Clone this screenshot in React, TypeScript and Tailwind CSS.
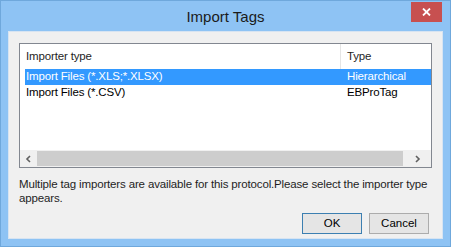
const FONT = { fontFamily: '"Segoe UI", "Liberation Sans", Arial, sans-serif' };

const ROWS = [
  { name: "Import Files (*.XLS;*.XLSX)", type: "Hierarchical", selected: true },
  { name: "Import Files (*.CSV)", type: "EBProTag", selected: false },
];

function TitleBar() {
  return (
    <div className="relative h-[30px] flex items-center justify-center">
      <span className="text-[15px] text-[#1b1b1b] mt-[2px]">Import Tags</span>
      {/* Close button */}
      <div className="absolute right-[8px] top-[1px] h-[20px] w-[31px] bg-[#c75050] flex items-center justify-center">
        <svg width="9" height="8" viewBox="0 0 9 8">
          <path d="M1 0.5 L8 7.5 M8 0.5 L1 7.5" stroke="white" strokeWidth="1.8" />
        </svg>
      </div>
    </div>
  );
}

function ImporterList() {
  return (
    <div className="h-[125px] border border-[#828790] bg-white flex flex-col">
      {/* Header */}
      <div className="flex h-[25px] text-[11.5px] tracking-[-0.15px] text-[#1e1e1e]">
        <div className="w-[320px] pl-[6px] flex items-center">Importer type</div>
        <div className="w-px bg-[#e5e5e5]" />
        <div className="pl-[6px] flex items-center">Type</div>
      </div>
      {/* Rows */}
      <div className="flex-1 pl-[5px]">
        {ROWS.map((r) => (
          <div
            key={r.name}
            className={`flex h-[16px] items-center text-[11.5px] tracking-[-0.15px] ${
              r.selected ? "bg-[#3399ff] text-white" : "text-black"
            }`}
          >
            <div className="w-[321px] pl-[1px]">{r.name}</div>
            <div className="pl-[1px]">{r.type}</div>
          </div>
        ))}
      </div>
      {/* Horizontal scrollbar */}
      <div className="h-[17px] flex bg-[#f0f0f0]">
        <div className="w-[17px] flex items-center justify-center">
          <svg width="7" height="8" viewBox="0 0 7 8">
            <path d="M5 1 L2 4 L5 7" stroke="#606060" strokeWidth="1.6" fill="none" />
          </svg>
        </div>
        <div className="flex-1 my-[1px] bg-[#cdcdcd]" />
        <div className="w-[28px] flex items-center justify-center">
          <svg width="7" height="8" viewBox="0 0 7 8">
            <path d="M2 1 L5 4 L2 7" stroke="#606060" strokeWidth="1.6" fill="none" />
          </svg>
        </div>
      </div>
    </div>
  );
}

export default function App() {
  return (
    <div
      className="w-[451px] h-[247px] bg-[#8ec3f4] border border-[#6fa8dc] flex flex-col"
      style={FONT}
    >
      <TitleBar />
      <div className="flex-1 mx-[7px] mb-[7px] bg-[#f0f0f0] border border-[#d7e4f2] pt-[11px] px-[10px] flex flex-col">
        <ImporterList />
        <p className="mt-[9px] text-[11.5px] tracking-[-0.15px] leading-[14px] text-[#1e1e1e]">
          Multiple tag importers are available for this protocol.Please select the importer type
          appears.
        </p>
        <div className="flex justify-end gap-[7px] mt-[8px] pr-[3px]">
          <button className="w-[60px] h-[21px] border border-[#3c7fb1] bg-[#e5e5e5] text-[11.5px] text-black">
            OK
          </button>
          <button className="w-[60px] h-[21px] border border-[#acacac] bg-[#e5e5e5] text-[11.5px] text-black">
            Cancel
          </button>
        </div>
      </div>
    </div>
  );
}
